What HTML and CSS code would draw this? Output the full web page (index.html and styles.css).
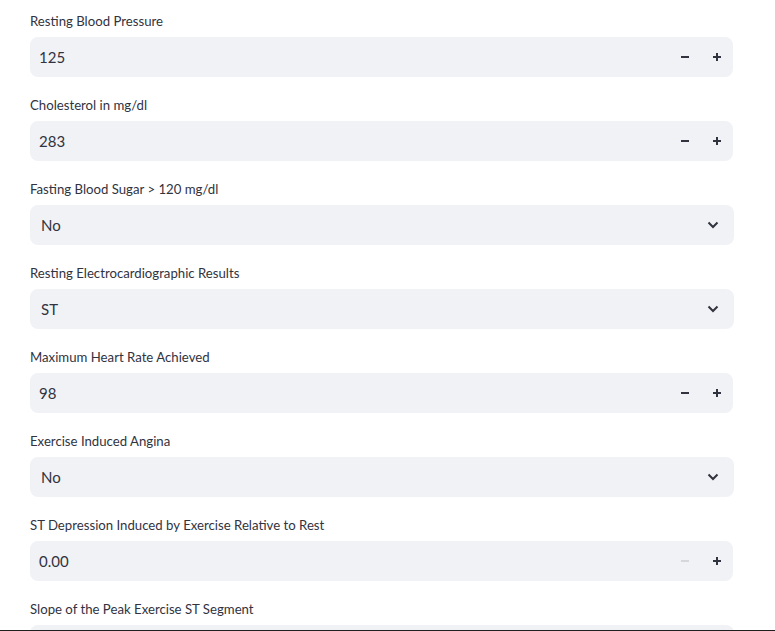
FILE: index.html
```html
<!DOCTYPE html>
<html>
<head>
<meta charset="utf-8">
<link rel="stylesheet" href="styles.css">
</head>
<body>
<div class="page">
  <div class="form">
    <div class="field">
      <div class="label">Resting Blood Pressure</div>
      <div class="box number">
        <span class="value">125</span>
        <div class="steps">
          <span class="step"><svg width="10" height="10" viewBox="0 0 10 10"><path d="M1 5h8" stroke="#31333f" stroke-width="2"/></svg></span>
          <span class="step"><svg width="10" height="10" viewBox="0 0 10 10"><path d="M1 5h8M5 1v8" stroke="#31333f" stroke-width="2"/></svg></span>
        </div>
      </div>
    </div>
    <div class="field">
      <div class="label">Cholesterol in mg/dl</div>
      <div class="box number">
        <span class="value">283</span>
        <div class="steps">
          <span class="step"><svg width="10" height="10" viewBox="0 0 10 10"><path d="M1 5h8" stroke="#31333f" stroke-width="2"/></svg></span>
          <span class="step"><svg width="10" height="10" viewBox="0 0 10 10"><path d="M1 5h8M5 1v8" stroke="#31333f" stroke-width="2"/></svg></span>
        </div>
      </div>
    </div>
    <div class="field">
      <div class="label">Fasting Blood Sugar &gt; 120 mg/dl</div>
      <div class="box select">
        <span class="value">No</span>
        <svg class="chev" width="12" height="8" viewBox="0 0 12 8"><path d="M1.5 1.5L6 6l4.5-4.5" fill="none" stroke="#31333f" stroke-width="2"/></svg>
      </div>
    </div>
    <div class="field">
      <div class="label">Resting Electrocardiographic Results</div>
      <div class="box select">
        <span class="value">ST</span>
        <svg class="chev" width="12" height="8" viewBox="0 0 12 8"><path d="M1.5 1.5L6 6l4.5-4.5" fill="none" stroke="#31333f" stroke-width="2"/></svg>
      </div>
    </div>
    <div class="field">
      <div class="label">Maximum Heart Rate Achieved</div>
      <div class="box number">
        <span class="value">98</span>
        <div class="steps">
          <span class="step"><svg width="10" height="10" viewBox="0 0 10 10"><path d="M1 5h8" stroke="#31333f" stroke-width="2"/></svg></span>
          <span class="step"><svg width="10" height="10" viewBox="0 0 10 10"><path d="M1 5h8M5 1v8" stroke="#31333f" stroke-width="2"/></svg></span>
        </div>
      </div>
    </div>
    <div class="field">
      <div class="label">Exercise Induced Angina</div>
      <div class="box select">
        <span class="value">No</span>
        <svg class="chev" width="12" height="8" viewBox="0 0 12 8"><path d="M1.5 1.5L6 6l4.5-4.5" fill="none" stroke="#31333f" stroke-width="2"/></svg>
      </div>
    </div>
    <div class="field">
      <div class="label">ST Depression Induced by Exercise Relative to Rest</div>
      <div class="box number">
        <span class="value">0.00</span>
        <div class="steps">
          <span class="step"><svg width="10" height="10" viewBox="0 0 10 10"><path d="M1 5h8" stroke="#d5d7dd" stroke-width="2"/></svg></span>
          <span class="step"><svg width="10" height="10" viewBox="0 0 10 10"><path d="M1 5h8M5 1v8" stroke="#31333f" stroke-width="2"/></svg></span>
        </div>
      </div>
    </div>
    <div class="field">
      <div class="label">Slope of the Peak Exercise ST Segment</div>
      <div class="box select"></div>
    </div>
  </div>
</div>
</body>
</html>
```

FILE: styles.css
```css
html, body {
  margin: 0;
  padding: 0;
  background: #ffffff;
}
body {
  font-family: "Source Sans Pro", Lato, "Liberation Sans", sans-serif;
  color: #31333f;
}
.page {
  height: 630px;
  overflow: hidden;
  border-bottom: 1px solid #1f1f1f;
}
.form {
  padding: 9px 0 0 30px;
  width: 704px;
  display: flex;
  flex-direction: column;
  gap: 16px;
}
.label {
  font-size: 13.2px;
  line-height: 24px;
  height: 24px;
  margin-bottom: 4px;
}
.box {
  height: 40px;
  background: #f0f2f6;
  border-radius: 8px;
  display: flex;
  align-items: center;
  font-size: 15px;
}
.number {
  width: 703px;
  padding-left: 9px;
  box-sizing: border-box;
}
.select {
  width: 704px;
  padding-left: 11px;
  padding-right: 15px;
  box-sizing: border-box;
}
.value {
  flex: 1;
}
.steps {
  display: flex;
  height: 100%;
}
.step {
  width: 32px;
  display: flex;
  align-items: center;
  justify-content: center;
}
.step svg, .chev {
  display: block;
}
```
